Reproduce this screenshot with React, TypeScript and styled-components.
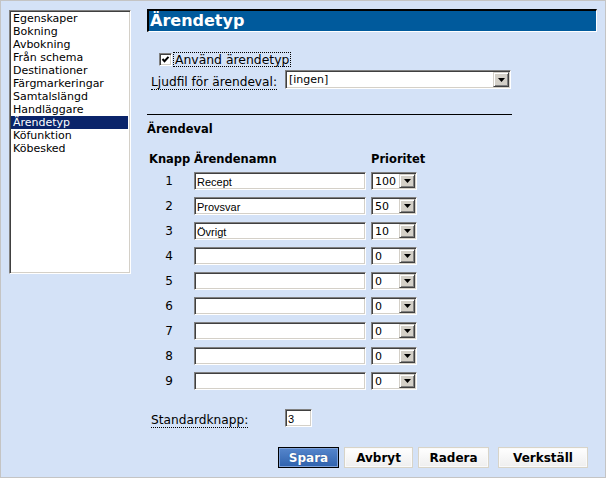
import { Fragment } from "react";
import styled, { createGlobalStyle } from "styled-components";

const GlobalStyle = createGlobalStyle`
  html, body {
    margin: 0;
    padding: 0;
    background: #d4e2f7;
  }
  * {
    box-sizing: border-box;
  }
`;

const Frame = styled.div`
  width: 606px;
  height: 478px;
  border: 1px solid #c4c4c4;
  background: #d4e2f7;
  display: flex;
  align-items: flex-start;
  padding: 8px 0 0 8px;
  font-family: "DejaVu Sans", Verdana, sans-serif;
  font-size: 12px;
  color: #000;
`;

const ListBox = styled.div`
  margin-top: 1px;
  width: 122px;
  height: 264px;
  background: #fff;
  border-top: 1px solid #808080;
  border-left: 1px solid #808080;
  border-right: 1px solid #fff;
  border-bottom: 1px solid #fff;
  box-shadow: inset 1px 1px 0 #404040, inset -1px -1px 0 #d4d0c8;
  padding: 1px 2px 1px 1px;
`;

const ListItem = styled.div<{ $selected?: boolean }>`
  font-size: 11px;
  line-height: 13px;
  height: 13px;
  padding-left: 2px;
  white-space: nowrap;
  background: ${(p) => (p.$selected ? "#0a246a" : "transparent")};
  color: ${(p) => (p.$selected ? "#fff" : "#000")};
`;

const Main = styled.div`
  margin-left: 16px;
  width: 450px;
  display: flex;
  flex-direction: column;
`;

const TitleBar = styled.div`
  height: 23px;
  background: #005a9c;
  border-top: 2px solid #000;
  border-left: 2px solid #000;
  border-right: 1px solid #fff;
  border-bottom: 1px solid #fff;
  color: #fff;
  font-weight: bold;
  font-size: 16px;
  line-height: 20px;
  padding-left: 1px;
`;

const CheckRow = styled.div`
  margin-top: 20px;
  padding-left: 12px;
  display: flex;
  align-items: center;
  height: 15px;
`;

const CheckBox = styled.span`
  width: 13px;
  height: 13px;
  margin-right: 1px;
  margin-top: -1px;
  background: #fff;
  border-top: 1px solid #808080;
  border-left: 1px solid #808080;
  border-right: 1px solid #fff;
  border-bottom: 1px solid #fff;
  box-shadow: inset 1px 1px 0 #404040, inset -1px -1px 0 #d4d0c8;
  display: flex;
  align-items: center;
  justify-content: center;
`;

const CheckLabel = styled.span`
  border: 1px dotted #000;
  line-height: 13px;
  padding: 0 1px 0 1px;
  font-size: 12.4px;
  white-space: nowrap;
`;

const FieldRow = styled.div<{ $top: number }>`
  margin-top: ${(p) => p.$top}px;
  padding-left: 4px;
  display: flex;
  align-items: flex-end;
`;

const LabelCell = styled.div`
  width: 134px;
  line-height: 14px;
  font-size: 12.2px;
`;

const DottedLabel = styled.span`
  border-bottom: 1px dotted #000;
  white-space: nowrap;
`;

const Sunken = styled.div<{ $w: number; $h?: number }>`
  width: ${(p) => p.$w}px;
  height: ${(p) => p.$h ?? 19}px;
  background: #fff;
  border-top: 1px solid #808080;
  border-left: 1px solid #808080;
  border-right: 1px solid #fff;
  border-bottom: 1px solid #fff;
  box-shadow: inset 1px 1px 0 #404040, inset -1px -1px 0 #d4d0c8;
  display: flex;
  align-items: stretch;
  padding: 1px;
`;

const SelectText = styled.div`
  flex: 1;
  font-size: 11px;
  line-height: 15px;
  padding-left: 2px;
  white-space: nowrap;
  overflow: hidden;
`;

const InputText = styled.div`
  flex: 1;
  font-family: "Liberation Sans", Arial, sans-serif;
  font-size: 11px;
  line-height: 16px;
  padding-left: 1px;
  white-space: nowrap;
`;

const DropButton = styled.div`
  width: 16px;
  background: #d4d0c8;
  border-top: 1px solid #d4d0c8;
  border-left: 1px solid #d4d0c8;
  border-right: 1px solid #404040;
  border-bottom: 1px solid #404040;
  box-shadow: inset 1px 1px 0 #fff, inset -1px -1px 0 #808080;
  display: flex;
  align-items: center;
  justify-content: center;
`;

const Rule = styled.div`
  margin-top: 25px;
  width: 365px;
  height: 1px;
  background: #000;
`;

const SectionTitle = styled.div`
  margin-top: 7px;
  font-weight: bold;
  font-size: 11.5px;
  line-height: 14px;
`;

const Table = styled.div`
  margin-top: 16px;
  padding-left: 2px;
  display: grid;
  grid-template-columns: 40px 172px 46px;
  column-gap: 5px;
  align-items: center;
`;

const HeadCell = styled.div`
  font-weight: bold;
  font-size: 11.5px;
  line-height: 14px;
  white-space: nowrap;
  margin-bottom: 6px;
`;

const NumCell = styled.div`
  text-align: center;
  font-size: 12px;
  line-height: 18px;
  margin-bottom: 7px;
`;

const CellBox = styled.div`
  margin-bottom: 7px;
`;

const Buttons = styled.div`
  margin-top: 20px;
  padding-right: 9px;
  display: flex;
  justify-content: flex-end;
`;

const Button = styled.div<{ $w: number; $gap?: number; $primary?: boolean }>`
  width: ${(p) => p.$w}px;
  height: 21px;
  margin-left: ${(p) => p.$gap ?? 0}px;
  display: flex;
  align-items: center;
  justify-content: center;
  font-weight: bold;
  font-size: 12px;
  color: ${(p) => (p.$primary ? "#fff" : "#000")};
  background: ${(p) =>
    p.$primary
      ? "linear-gradient(#5686cc, #2f62ad)"
      : "linear-gradient(#ffffff, #eeeeee)"};
  border: 1px solid ${(p) => (p.$primary ? "#000" : "#d8d4c8")};
  box-shadow: ${(p) =>
    p.$primary ? "inset 0 0 0 1px #7ea2da" : "inset 0 0 0 1px #fafafa"};
  text-shadow: ${(p) => (p.$primary ? "0 0 1px #1c3f7a" : "none")};
`;

const Arrow = () => (
  <svg width="7" height="4" viewBox="0 0 7 4">
    <path d="M0 0 H7 L3.5 4 Z" fill="#000" />
  </svg>
);

const Check = () => (
  <svg width="9" height="9" viewBox="0 0 9 9">
    <path d="M1.5 4 L3.5 6.2 L7.5 1.8" stroke="#000" strokeWidth="2" fill="none" />
  </svg>
);

const menu = [
  "Egenskaper",
  "Bokning",
  "Avbokning",
  "Från schema",
  "Destinationer",
  "Färgmarkeringar",
  "Samtalslängd",
  "Handläggare",
  "Ärendetyp",
  "Köfunktion",
  "Köbesked",
];

const rows = [
  { name: "Recept", prio: "100" },
  { name: "Provsvar", prio: "50" },
  { name: "Övrigt", prio: "10" },
  { name: "", prio: "0" },
  { name: "", prio: "0" },
  { name: "", prio: "0" },
  { name: "", prio: "0" },
  { name: "", prio: "0" },
  { name: "", prio: "0" },
];

export default function App() {
  return (
    <>
      <GlobalStyle />
      <Frame>
        <ListBox>
          {menu.map((m) => (
            <ListItem key={m} $selected={m === "Ärendetyp"}>
              {m}
            </ListItem>
          ))}
        </ListBox>
        <Main>
          <TitleBar>Ärendetyp</TitleBar>
          <CheckRow>
            <CheckBox>
              <Check />
            </CheckBox>
            <CheckLabel>Använd ärendetyp</CheckLabel>
          </CheckRow>
          <FieldRow $top={3}>
            <LabelCell>
              <DottedLabel>Ljudfil för ärendeval:</DottedLabel>
            </LabelCell>
            <Sunken $w={226}>
              <SelectText>[ingen]</SelectText>
              <DropButton>
                <Arrow />
              </DropButton>
            </Sunken>
          </FieldRow>
          <Rule />
          <SectionTitle>Ärendeval</SectionTitle>
          <Table>
            <HeadCell>Knapp</HeadCell>
            <HeadCell>Ärendenamn</HeadCell>
            <HeadCell>Prioritet</HeadCell>
            {rows.map((r, i) => (
              <Fragment key={i}>
                <NumCell>{i + 1}</NumCell>
                <CellBox>
                  <Sunken $w={172} $h={18}>
                    <InputText>{r.name}</InputText>
                  </Sunken>
                </CellBox>
                <CellBox>
                  <Sunken $w={46} $h={18}>
                    <SelectText>{r.prio}</SelectText>
                    <DropButton>
                      <Arrow />
                    </DropButton>
                  </Sunken>
                </CellBox>
              </Fragment>
            ))}
          </Table>
          <FieldRow $top={12}>
            <LabelCell>
              <DottedLabel>Standardknapp:</DottedLabel>
            </LabelCell>
            <Sunken $w={27} $h={18}>
              <InputText>3</InputText>
            </Sunken>
          </FieldRow>
          <Buttons>
            <Button $w={61} $primary>
              Spara
            </Button>
            <Button $w={69} $gap={5}>
              Avbryt
            </Button>
            <Button $w={71} $gap={5}>
              Radera
            </Button>
            <Button $w={90} $gap={9}>
              Verkställ
            </Button>
          </Buttons>
        </Main>
      </Frame>
    </>
  );
}
